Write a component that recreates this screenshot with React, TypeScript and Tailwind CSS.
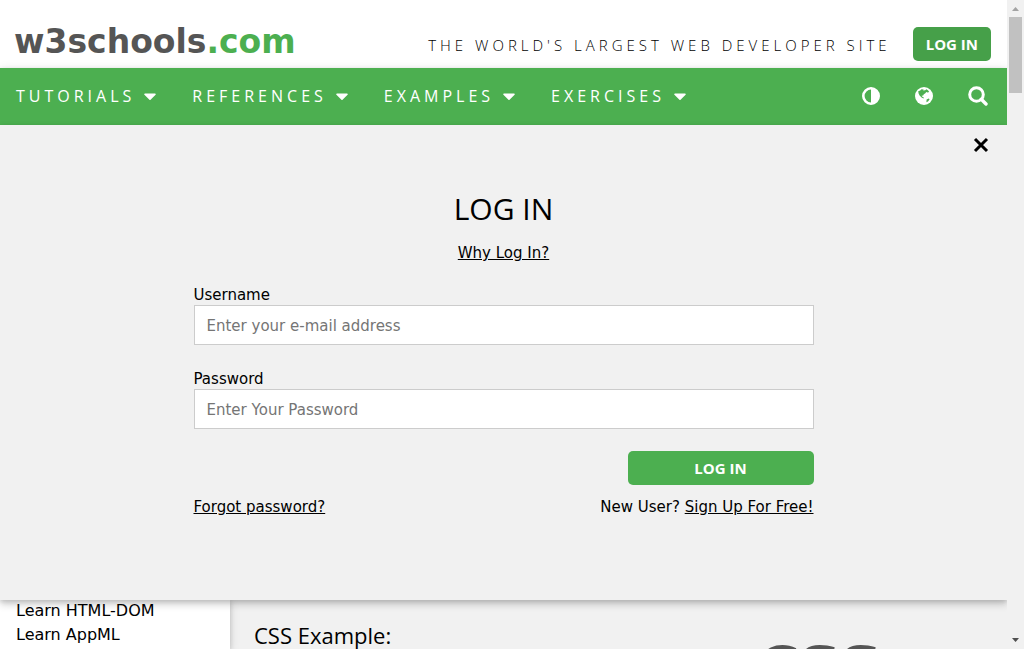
import React from "react";
import { FaCaretDown } from "react-icons/fa";

const menus = ["TUTORIALS", "REFERENCES", "EXAMPLES", "EXERCISES"];

function ContrastIcon() {
  return (
    <svg viewBox="0 0 18 18" className="size-[18px]" aria-hidden="true">
      <circle cx="9" cy="9" r="7.7" fill="none" stroke="currentColor" strokeWidth="2.600" />
      <path d="M9 1a8 8 0 0 1 0 16z" fill="currentColor" />
    </svg>
  );
}

function GlobeIcon() {
  return (
    <svg viewBox="0 0 18 18" className="size-[18px]" aria-hidden="true">
      <circle cx="9" cy="9" r="9" fill="currentColor" />
      <path
        d="M3.200 4.300 5.200 3.400 6.500 2.200 8.600 2.400 8.200 3.600 10.200 3.200 11.500 2.300 13.200 3.400 14.200 5 12.600 5.400 11.200 5 10.400 6.200 8.800 7.200 8.200 8.600 6.600 8.800 7.400 9.800 8.800 10.400 8.600 11.400 6.600 10.400 4.600 8.600 3.600 6.400zM11.600 12.400 13.800 11.400 14.600 12.200 13 14.400 11.400 15.200z"
        fill="#4caf50"
      />
    </svg>
  );
}

function SearchIcon() {
  return (
    <svg viewBox="0 0 20 20" className="size-5" fill="none" stroke="currentColor" aria-hidden="true">
      <circle cx="8.500" cy="8.500" r="6.800" strokeWidth="3" />
      <path d="M13.300 13.300 18 18" strokeWidth="3.400" strokeLinecap="round" />
    </svg>
  );
}

function Header() {
  return (
    <header className="flex h-[68px] items-center justify-between bg-white pt-5 pr-4 pl-3.5">
      <a href="#home" className="pb-1 font-['DejaVu_Sans',sans-serif] text-[33px] leading-10 font-bold text-[#555555]">
        w3schools<span className="text-[#4caf50]">.com</span>
      </a>
      <div className="flex items-center gap-[22px]">
        <p className="pt-0.5 text-[15px] font-light tracking-[4px]">THE WORLD'S LARGEST WEB DEVELOPER SITE</p>
        <button type="button" className="h-[34px] rounded-[5px] bg-[#46a049] px-[13px] text-[15px] font-bold text-white">
          LOG IN
        </button>
      </div>
    </header>
  );
}

function NavBar() {
  return (
    <nav className="relative flex h-[57px] items-center justify-between bg-[#4caf50] px-4 pb-0.5 text-white shadow-[0_2px_5px_0_rgba(0,0,0,0.16),0_2px_10px_0_rgba(0,0,0,0.12)]">
      <ul className="flex gap-8">
        {menus.map((name) => (
          <li key={name}>
            <a href={"#" + name.toLowerCase()} className="flex items-center gap-[5px] text-base tracking-[4px]">
              {name}
              <FaCaretDown className="size-5" />
            </a>
          </li>
        ))}
      </ul>
      <div className="flex items-center gap-[35px] pr-[3px]">
        <button type="button" aria-label="Toggle dark mode"><ContrastIcon /></button>
        <button type="button" aria-label="Translate"><GlobeIcon /></button>
        <button type="button" aria-label="Search"><SearchIcon /></button>
      </div>
    </nav>
  );
}

function Field({ id, label, type, placeholder }: { id: string; label: string; type: string; placeholder: string }) {
  return (
    <div className="flex flex-col">
      <label htmlFor={id} className="leading-5">{label}</label>
      <input
        id={id}
        type={type}
        placeholder={placeholder}
        className="h-10 w-full border border-[#cccccc] bg-white px-3 pt-0.5 placeholder:text-[#757575]"
      />
    </div>
  );
}

function LoginPanel() {
  return (
    <section className="relative z-10 h-[475px] shrink-0 bg-[#f1f1f1] shadow-[0_4px_8px_0_rgba(0,0,0,0.2),0_2px_4px_0_rgba(0,0,0,0.1)]">
      <div className="flex h-10 items-center justify-end pr-[18px]">
        <button type="button" aria-label="Close">
          <svg viewBox="0 0 16 16" className="size-4" stroke="#000000" strokeWidth="3" fill="none">
            <path d="M2 2 14 14M14 2 2 14" />
          </svg>
        </button>
      </div>
      <form className="mx-auto flex w-[620px] max-w-full flex-col pt-5 font-['DejaVu_Sans',sans-serif] text-[15px]">
        <h1 className="text-center font-['Open_Sans',sans-serif] text-[30px] leading-12">LOG IN</h1>
        <a href="#why" className="mt-2 self-center leading-6 underline">Why Log In?</a>
        <div className="mt-5 flex flex-col gap-6">
          <Field id="username" label="Username" type="text" placeholder="Enter your e-mail address" />
          <Field id="password" label="Password" type="password" placeholder="Enter Your Password" />
        </div>
        <button type="submit" className="mt-[22px] h-[34px] w-[30%] self-end rounded-[5px] bg-[#4caf50] font-['Open_Sans',sans-serif] font-bold text-white">
          LOG IN
        </button>
        <div className="mt-2.5 flex justify-between leading-6">
          <a href="#forgot" className="underline">Forgot password?</a>
          <p>New User? <a href="#signup" className="underline">Sign Up For Free!</a></p>
        </div>
      </form>
    </section>
  );
}

function PageContent() {
  return (
    <div className="-mt-px flex min-h-0 flex-1">
      <aside className="w-[230px] shrink-0 bg-white pl-4 font-['DejaVu_Sans',sans-serif] text-base shadow-[0_2px_5px_0_rgba(0,0,0,0.16),0_2px_10px_0_rgba(0,0,0,0.12)]">
        <a href="#html-dom" className="block leading-6">Learn HTML-DOM</a>
        <a href="#appml" className="block leading-6">Learn AppML</a>
      </aside>
      <main className="flex flex-1 justify-between pr-32 pl-6">
        <h2 className="pt-[18px] text-[22px] leading-9">CSS Example:</h2>
        <p className="pt-10 font-['DejaVu_Sans',sans-serif] text-[60px] leading-[60px] font-bold text-[#555555] italic">CSS</p>
      </main>
    </div>
  );
}

function ScrollBar() {
  return (
    <div className="flex w-[17px] shrink-0 flex-col items-center justify-between bg-[#f1f1f1]" aria-hidden="true">
      <div className="flex w-full flex-col items-center">
        <svg viewBox="0 0 17 17" className="size-[17px]"><path d="M5 11h7L8.500 7z" fill="#a3a3a3" /></svg>
        <div className="h-[76px] w-[13px] bg-[#c1c1c1]" />
      </div>
      <svg viewBox="0 0 17 17" className="size-[17px]"><path d="M5 6h7l-3.500 4z" fill="#505050" /></svg>
    </div>
  );
}

export default function App() {
  return (
    <div className="flex h-screen overflow-hidden bg-[#f1f1f1] font-['Open_Sans',sans-serif] text-black">
      <div className="flex min-w-0 flex-1 flex-col overflow-hidden">
        <Header />
        <NavBar />
        <LoginPanel />
        <PageContent />
      </div>
      <ScrollBar />
    </div>
  );
}
